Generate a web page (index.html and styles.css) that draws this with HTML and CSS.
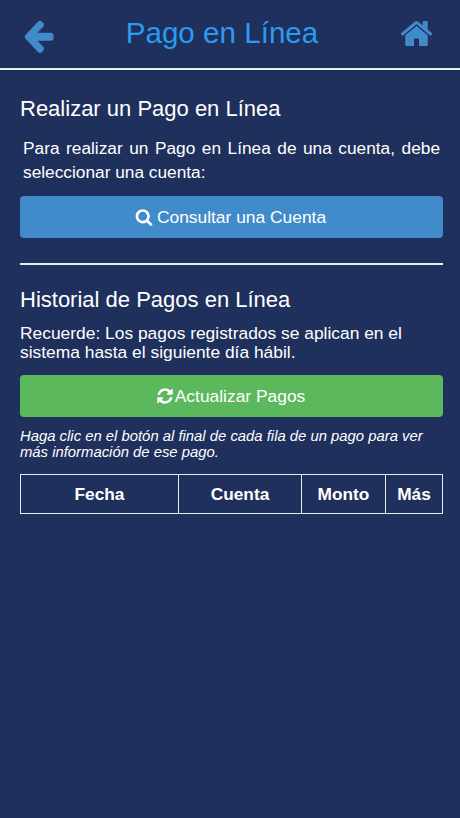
FILE: index.html
```html
<!DOCTYPE html>
<html lang="es">
<head>
    <meta charset="UTF-8">
    <meta name="viewport" content="width=device-width, initial-scale=1.0">
    <title>Pago en Línea</title>
    <link rel="stylesheet" href="styles.css">
</head>
<body>
    <header class="top-bar">
        <a class="top-icon" href="#" aria-label="Volver">
            <svg class="icon-back" viewBox="0 0 1792 1792" preserveAspectRatio="none"><path d="M1664 896v128q0 53-32.5 90.5t-84.5 37.5h-704l293 294q38 36 38 90t-38 90l-75 76q-37 37-90 37-52 0-91-37l-651-652q-37-37-37-90 0-52 37-91l651-650q38-38 91-38 52 0 90 38l75 74q38 38 38 91t-38 91l-293 293h704q52 0 84.5 37.5t32.5 90.5z"/></svg>
        </a>
        <h1 class="top-title">Pago en Línea</h1>
        <a class="top-icon" href="#" aria-label="Inicio">
            <svg class="icon-home" viewBox="0 0 1792 1792"><path d="M1472 992v480q0 26-19 45t-45 19h-384v-384h-256v384h-384q-26 0-45-19t-19-45v-480q0-1 .5-3t.5-3l575-474 575 474q1 2 1 6zm223-69l-62 74q-8 9-21 11h-3q-13 0-21-7l-692-577-692 577q-12 8-24 7-13-2-21-11l-62-74q-8-10-7-23.5t11-21.5l719-599q32-26 76-26t76 26l244 204v-195q0-14 9-23t23-9h192q14 0 23 9t9 23v408l219 182q10 8 11 21.5t-7 23.5z"/></svg>
        </a>
    </header>

    <main class="content">
        <section class="pay-section">
            <h2 class="section-title">Realizar un Pago en Línea</h2>
            <p class="pay-text">Para realizar un Pago en Línea de una cuenta, debe seleccionar una cuenta:</p>
            <button class="btn btn-blue">
                <svg class="btn-icon" viewBox="0 0 1792 1792"><path d="M1216 832q0-185-131.5-316.5t-316.5-131.5-316.5 131.5-131.5 316.5 131.5 316.5 316.5 131.5 316.5-131.5 131.5-316.5zm512 832q0 52-38 90t-90 38q-54 0-90-38l-343-342q-179 124-399 124-143 0-273.5-55.5t-225-150-150-225-55.5-273.5 55.5-273.5 150-225 225-150 273.5-55.5 273.5 55.5 225 150 150 225 55.5 273.5q0 220-124 399l343 343q37 37 37 90z"/></svg>
                Consultar una Cuenta
            </button>
        </section>

        <hr class="divider">

        <section class="history-section">
            <h2 class="section-title">Historial de Pagos en Línea</h2>
            <p class="history-text">Recuerde: Los pagos registrados se aplican en el sistema hasta el siguiente día hábil.</p>
            <button class="btn btn-green">
                <svg class="btn-icon" viewBox="0 0 1792 1792"><path d="M1639 1056q0 5-1 7-64 268-268 434.5t-478 166.5q-146 0-282.5-55t-243.5-157l-129 129q-19 19-45 19t-45-19-19-45v-448q0-26 19-45t45-19h448q26 0 45 19t19 45-19 45l-137 137q71 66 161 102t187 36q134 0 250-65t186-179q11-17 53-117 8-23 30-23h192q13 0 22.5 9.5t9.5 22.5zm25-800v448q0 26-19 45t-45 19h-448q-26 0-45-19t-19-45 19-45l138-138q-148-137-349-137-134 0-250 65t-186 179q-11 17-53 117-8 23-30 23h-199q-13 0-22.5-9.5t-9.5-22.5v-7q65-268 270-434.5t480-166.5q146 0 284 55.5t245 156.5l130-129q19-19 45-19t45 19 19 45z"/></svg>
                Actualizar Pagos
            </button>
            <p class="hint">Haga clic en el botón al final de cada fila de un pago para ver más información de ese pago.</p>
            <table class="pay-table">
                <thead>
                    <tr>
                        <th class="col-date">Fecha</th>
                        <th class="col-account">Cuenta</th>
                        <th class="col-amount">Monto</th>
                        <th class="col-more">Más</th>
                    </tr>
                </thead>
            </table>
        </section>
    </main>
</body>
</html>
```

FILE: styles.css
```css
* {
    box-sizing: border-box;
}
body {
    margin: 0;
    min-height: 818px;
    font-family: "Liberation Sans", Arial, sans-serif;
    background-color: #1f305c;
    color: #fff;
}
.top-bar {
    display: grid;
    grid-template-columns: 35px 1fr 35px;
    align-items: center;
    height: 70px;
    padding: 0 26px 0 21px;
    border-bottom: 2px solid #e8edf5;
}
.top-icon {
    display: flex;
    align-items: center;
    justify-content: center;
}
.top-icon svg {
    fill: #428bca;
}
.icon-back {
    width: 35px;
    height: 37px;
    margin-top: 2px;
}
.icon-home {
    width: 35px;
    height: 35px;
    margin-bottom: 1px;
}
.top-title {
    margin: 0 0 2px;
    padding-right: 11px;
    font-size: 29.6px;
    font-weight: normal;
    text-align: center;
    color: #2a9bf0;
}
.content {
    padding: 0 17px 0 20px;
}
.pay-section {
    padding-top: 26px;
}
.section-title {
    margin: 0;
    font-size: 22px;
    line-height: 26px;
    font-weight: normal;
}
.pay-text {
    margin: 14px 3px 0;
    font-size: 17.3px;
    line-height: 24px;
    text-align: justify;
}
.btn {
    display: flex;
    align-items: center;
    justify-content: center;
    width: 100%;
    height: 42px;
    border: none;
    border-radius: 4px;
    color: #fff;
    font-family: inherit;
    font-size: 17.4px;
}
.btn-blue {
    gap: 4px;
    margin-top: 12px;
    padding: 0 2px 0 0;
    background-color: #428bca;
}
.btn-green {
    gap: 1px;
    margin-top: 13px;
    padding: 0 2px 0 0;
    background-color: #5cb85c;
}
.btn-icon {
    width: 18px;
    height: 18px;
    fill: #fff;
}
.divider {
    margin: 25px 0 0;
    border: none;
    border-top: 2px solid #e8edf5;
}
.history-section {
    padding-top: 22px;
}
.history-text {
    margin: 11px 0 0;
    font-size: 17.4px;
    line-height: 19px;
}
.hint {
    margin: 11px 0 0;
    font-size: 14.85px;
    line-height: 16px;
    font-style: italic;
}
.pay-table {
    width: 100%;
    margin-top: 14px;
    border-collapse: collapse;
    table-layout: fixed;
}
.pay-table th {
    height: 39px;
    padding: 0;
    border: 1px solid #e8edf5;
    font-size: 17.3px;
}
.col-date {
    width: 158px;
}
.col-account {
    width: 123px;
}
.col-amount {
    width: 84px;
}
```
